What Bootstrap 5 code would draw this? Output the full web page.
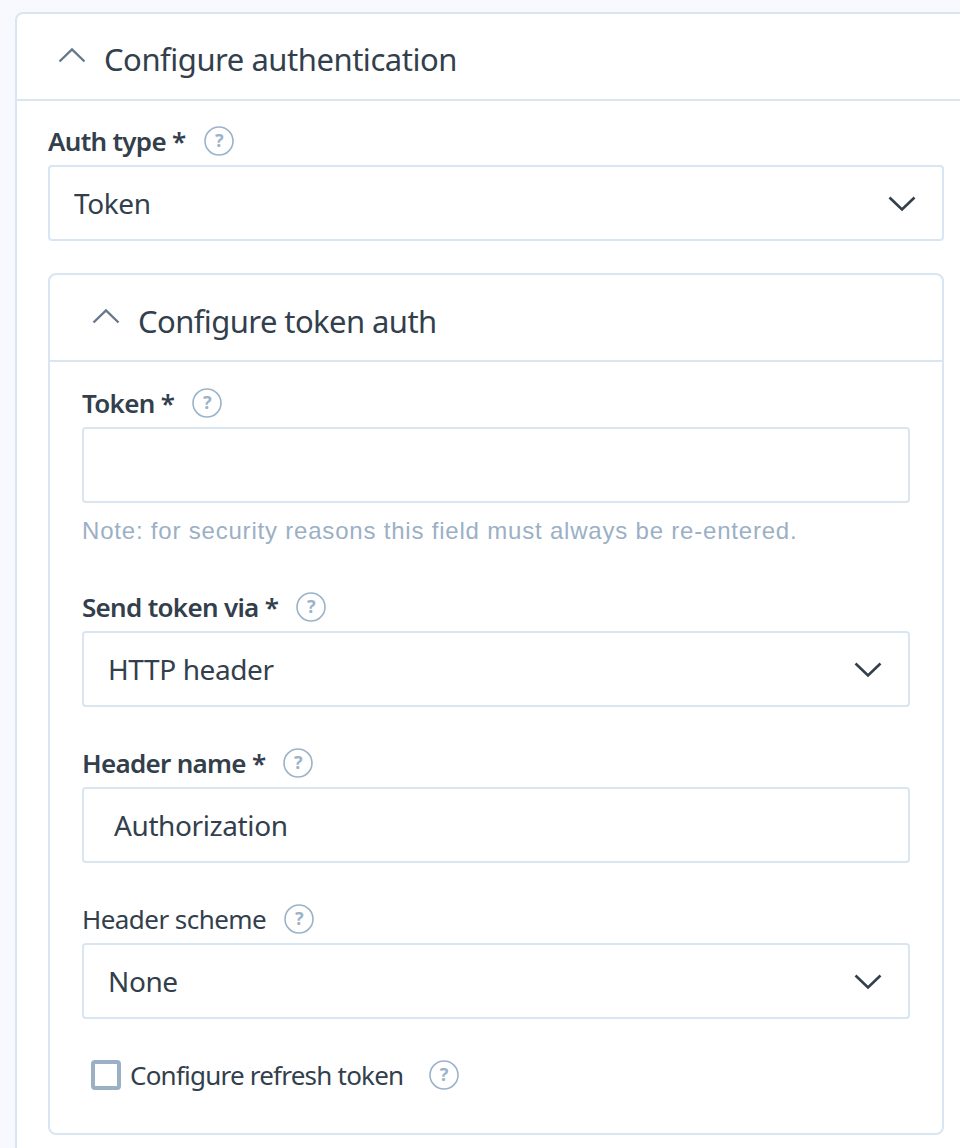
<!DOCTYPE html>
<html lang="en">
<head>
<meta charset="utf-8">
<title>Configure authentication</title>
<link href="https://cdn.jsdelivr.net/npm/bootstrap@5.3.0/dist/css/bootstrap.min.css" rel="stylesheet">
<style>
html, body { height: 100%; }
body { background: #f7f9fe; color: #333f4c; font-family: "Noto Sans", sans-serif; overflow: hidden; padding: 12px 0 0 15px; width: 960px; height: 1148px; }
.sheet { width: 980px; background: #fff; border: 2px solid #d9e5f0; border-radius: 8px; }
.inner-sheet { background: #fff; border: 2px solid #d9e5f0; border-radius: 8px; margin-top: 32px; height: 862px; }
.sheet-head { height: 87px; padding-left: 42px; border-bottom: 2px solid #d9e5f0; gap: 18px; font-size: 31px; letter-spacing: -.47px; line-height: 1; }
.sheet > .sheet-head { padding-left: 41px; }
.head-caret { margin-bottom: 3px; flex: none; }
.head-title { margin-top: 5px; }
.inner-sheet .sheet-head { letter-spacing: -.58px; }
.inner-sheet .head-title { margin-top: 8px; }
.sheet-body { padding: 22px 0 60px 31px; width: 927px; }
.inner-body { padding: 23px 32px 0 32px; }
.field-label { font-size: 26px; letter-spacing: -.7px; line-height: 36px; font-weight: 600; margin: 0 0 6px; gap: 18px; color: #333f4c; }
.field-label.plain { font-weight: 400; letter-spacing: -.55px; }
.help-ring { width: 30px; height: 30px; flex: none; }
.sheet .form-control, .sheet .form-select { height: 76px; border: 2px solid #d9e5f0; border-radius: 4px; font-size: 28px; letter-spacing: -.4px; color: #333f4c; box-shadow: none; }
.sheet .form-control { padding: 0 30px; }
.sheet .form-select { padding: 0 24px; background-image: none; }
.select-wrap { position: relative; }
.select-caret { position: absolute; right: 28px; top: 31px; width: 28px; height: 16px; pointer-events: none; }
.hint { font-family: "Liberation Sans", sans-serif; font-size: 24px; letter-spacing: .8px; color: #9bb0c5; line-height: 28px; margin: 14px 0 44px; }
.field-gap-s { margin-top: 38px; }
.sheet .form-check-input { width: 30px; height: 30px; margin: 0; border: 4px solid #9bb0c5; border-radius: 4px; float: none; }
.check-row { padding: 0 0 0 9px; margin: 38px 0 0; min-height: 0; gap: 9px; }
.check-row .form-check-label { font-size: 26px; letter-spacing: -.78px; line-height: 36px; margin-right: 17px; }
</style>
</head>
<body>
<div class="sheet">
  <div class="sheet-head d-flex align-items-center">
    <svg class="head-caret" width="28" height="16" viewBox="0 0 28 16" fill="none" stroke="#66788a" stroke-width="2.4"><path d="M1.5 14.5 14 2.5l12.500 12"/></svg>
    <span class="head-title">Configure authentication</span>
  </div>
  <div class="sheet-body">
    <label class="field-label d-flex align-items-center">Auth type * <svg class="help-ring" viewBox="0 0 30 30"><circle cx="15" cy="15" r="14" fill="none" stroke="#9bb3c9" stroke-width="1.6"/><text x="15" y="21" text-anchor="middle" font-family="Noto Sans, sans-serif" font-size="18" font-weight="700" fill="#9bb3c9">?</text></svg></label>
    <div class="select-wrap">
      <select class="form-select"><option>Token</option></select>
      <svg class="select-caret" viewBox="0 0 28 16" fill="none" stroke="#333f4c" stroke-width="2.6"><path d="M1.500 1.500 14 13.500l12.500-12"/></svg>
    </div>
    <div class="inner-sheet">
      <div class="sheet-head d-flex align-items-center">
        <svg class="head-caret" width="28" height="16" viewBox="0 0 28 16" fill="none" stroke="#66788a" stroke-width="2.4"><path d="M1.5 14.5 14 2.5l12.500 12"/></svg>
        <span class="head-title">Configure token auth</span>
      </div>
      <div class="inner-body">
        <label class="field-label d-flex align-items-center">Token * <svg class="help-ring" viewBox="0 0 30 30"><circle cx="15" cy="15" r="14" fill="none" stroke="#9bb3c9" stroke-width="1.6"/><text x="15" y="21" text-anchor="middle" font-family="Noto Sans, sans-serif" font-size="18" font-weight="700" fill="#9bb3c9">?</text></svg></label>
        <input type="text" class="form-control">
        <p class="hint">Note: for security reasons this field must always be re-entered.</p>
        <label class="field-label d-flex align-items-center">Send token via * <svg class="help-ring" viewBox="0 0 30 30"><circle cx="15" cy="15" r="14" fill="none" stroke="#9bb3c9" stroke-width="1.6"/><text x="15" y="21" text-anchor="middle" font-family="Noto Sans, sans-serif" font-size="18" font-weight="700" fill="#9bb3c9">?</text></svg></label>
        <div class="select-wrap">
          <select class="form-select"><option>HTTP header</option></select>
          <svg class="select-caret" viewBox="0 0 28 16" fill="none" stroke="#333f4c" stroke-width="2.6"><path d="M1.500 1.500 14 13.500l12.500-12"/></svg>
        </div>
        <label class="field-label d-flex align-items-center field-gap-s">Header name * <svg class="help-ring" viewBox="0 0 30 30"><circle cx="15" cy="15" r="14" fill="none" stroke="#9bb3c9" stroke-width="1.6"/><text x="15" y="21" text-anchor="middle" font-family="Noto Sans, sans-serif" font-size="18" font-weight="700" fill="#9bb3c9">?</text></svg></label>
        <input type="text" class="form-control" value="Authorization">
        <label class="field-label plain d-flex align-items-center field-gap-s">Header scheme <svg class="help-ring" viewBox="0 0 30 30"><circle cx="15" cy="15" r="14" fill="none" stroke="#9bb3c9" stroke-width="1.6"/><text x="15" y="21" text-anchor="middle" font-family="Noto Sans, sans-serif" font-size="18" font-weight="700" fill="#9bb3c9">?</text></svg></label>
        <div class="select-wrap">
          <select class="form-select"><option>None</option></select>
          <svg class="select-caret" viewBox="0 0 28 16" fill="none" stroke="#333f4c" stroke-width="2.6"><path d="M1.500 1.500 14 13.500l12.500-12"/></svg>
        </div>
        <div class="form-check check-row d-flex align-items-center">
          <input class="form-check-input" type="checkbox" id="refresh">
          <label class="form-check-label" for="refresh">Configure refresh token</label>
          <svg class="help-ring" viewBox="0 0 30 30"><circle cx="15" cy="15" r="14" fill="none" stroke="#9bb3c9" stroke-width="1.6"/><text x="15" y="21" text-anchor="middle" font-family="Noto Sans, sans-serif" font-size="18" font-weight="700" fill="#9bb3c9">?</text></svg>
        </div>
      </div>
    </div>
  </div>
</div>
<script src="https://cdn.jsdelivr.net/npm/bootstrap@5.3.0/dist/js/bootstrap.bundle.min.js"></script>
</body>
</html>
